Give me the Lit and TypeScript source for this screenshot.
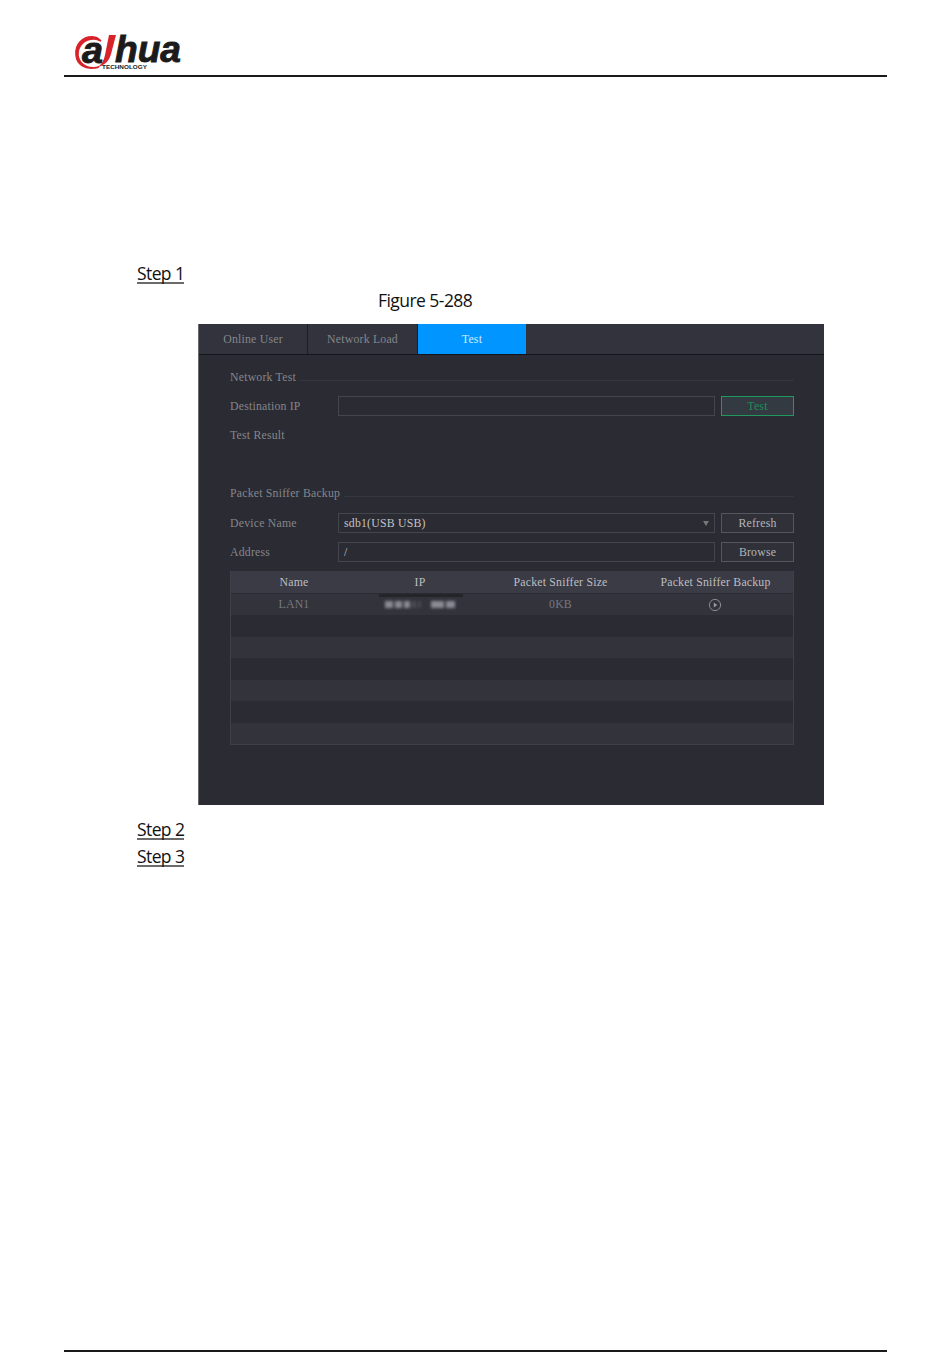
import { LitElement, html, css } from "lit";
import { customElement } from "lit/decorators.js";

@customElement("app-root")
export class AppRoot extends LitElement {
  static styles = css`
    :host { display: block; width: 950px; height: 1369px; background: #fff; overflow: hidden; }
    .page { height: 1369px; box-sizing: border-box; padding: 0 63px 0 64px; display: flex; flex-direction: column; position: relative; }
    .head { height: 75px; border-bottom: 2px solid #1a1a1a; flex: none; display: flex; align-items: flex-end; }
    .logo { display: block; margin-left: 9px; margin-bottom: -1px; overflow: visible; }
    .logo .word { font: italic 700 36px "Liberation Sans", sans-serif; fill: #1b1b1b; stroke: #1b1b1b; stroke-width: 0.9px; }
    .logo .tech { font: 700 6.2px "Liberation Sans", sans-serif; fill: #222; }
    .body { flex: 1; padding: 0 0 0 73px; display: flex; flex-direction: column; }
    .step { font: 17.5px "Open Sans", sans-serif; color: #111; letter-spacing: -0.6px; width: 47px; border-bottom: 2px solid #6b6b6b; box-sizing: border-box; height: 20px; line-height: 18px; white-space: nowrap; }
    .s1 { margin-top: 187px; }
    .cap { font: 17.5px/24px "Open Sans", sans-serif; color: #111; letter-spacing: -0.55px; margin: 4px 0 0 241px; height: 24px; }
    .panel { width: 626px; height: 481px; margin: 12px 0 0 61px; background: #2a2b33; box-sizing: border-box; border-left: 1px solid #6a6a70; font: 11.8px "Liberation Serif", serif; letter-spacing: 0.2px; color: #85868b; display: flex; flex-direction: column; }
    .tabs { display: flex; height: 31px; flex: none; background: #32333c; border-bottom: 1px solid #14151a; box-sizing: border-box; }
    .tab { width: 110px; display: flex; align-items: center; justify-content: center; border-right: 1px solid #1d1e24; box-sizing: border-box; }
    .tab.first { width: 109px; }
    .tab.on { background: #0095ff; color: #d5ecff; width: 108px; border-right: none; }
    .content { padding: 12px 30px 0 31px; display: flex; flex-direction: column; }
    .sec { display: flex; height: 20px; align-items: center; }
    .sec span { white-space: nowrap; padding-right: 4px; }
    .sec i { flex: 1; height: 1px; background: #35363e; margin-top: 6px; }
    .row { display: grid; grid-template-columns: 102px 377px 73px; column-gap: 6px; height: 20px; align-items: center; }
    .row.t9 { margin-top: 9px; }
    .row.t10 { margin-top: 10px; }
    .f { height: 20px; box-sizing: border-box; border: 1px solid #44464e; padding-left: 5px; line-height: 18px; color: #c2c3c6; position: relative; }
    .b { height: 20px; box-sizing: border-box; border: 1px solid #55565e; background: #2f3038; display: flex; align-items: center; justify-content: center; color: #b4b5b9; }
    .b.green { border-color: #1f9a5c; background: #333a42; color: #1f8c58; }
    .arrow { position: absolute; right: 5px; top: 7px; width: 0; height: 0; border-left: 3.5px solid transparent; border-right: 3.5px solid transparent; border-top: 5px solid #777; }
    .gap1 { margin-top: 9px; height: 20px; display: flex; align-items: center; }
    .sec2 { margin-top: 38px; }
    .tbl { margin-top: 9px; height: 174px; box-sizing: border-box; border: 1px solid #3f4048; border-top: none; display: flex; flex-direction: column; }
    .tr { display: grid; grid-template-columns: 126px 126px 155px 155px; flex: 1; align-items: center; text-align: center; }
    .tr.h { flex: none; height: 23px; background: #3a3b44; color: #bdbec2; border-bottom: 1px solid #2a2b33; box-sizing: border-box; }
    .tr.a { background: #32333b; }
    .tr.lan { color: #77787e; }
    .ipc { position: relative; display: flex; justify-content: center; }
    .ip { display: flex; gap: 2px; height: 7px; filter: blur(1.5px); }
    .ip b { display: block; background: #8a8b93; }
    .ipc::before { content: ""; position: absolute; left: 22px; width: 84px; top: -7px; height: 3px; background: #24252b; filter: blur(.5px); }
    .play { display: block; margin: 0 auto; transform: translateX(-1px); }
    .s2 { margin-top: 15px; }
    .s3 { margin-top: 7px; }
    .foot { flex: none; height: 2px; background: #1a1a1a; margin-bottom: 17px; }
  `;

  render() {
    const blanks = ["", "a", "", "a", "", "a"];
    return html`
      <div class="page">
        <div class="head">
          <svg class="logo" width="112" height="44" viewBox="0 0 112 44">
            <path d="M21 5C9 4 2 13 3 23c1 10 9 14 18 13 2 0 4-1 5-1-8 2-19 0-21-11C4 13 12 7 21 7c3 0 5 1 7 2-2-2-4-4-7-4z" fill="#d8232a" stroke="#d8232a" stroke-width="1.6"/>
            <text class="word" x="9" y="31" textLength="21" lengthAdjust="spacingAndGlyphs">a</text>
            <path d="M36 3h7l-5 19c-2 7-6 11-13 13 4-3 6-7 7-12z" fill="#d8232a"/>
            <text class="word" x="42" y="30" textLength="66" lengthAdjust="spacingAndGlyphs">hua</text>
            <text class="tech" x="29" y="37" textLength="45" lengthAdjust="spacingAndGlyphs">TECHNOLOGY</text>
          </svg>
        </div>
        <div class="body">
          <div class="step s1">Step 1</div>
          <div class="cap">Figure 5-288</div>
          <div class="panel">
            <div class="tabs">
              <div class="tab first">Online User</div>
              <div class="tab">Network Load</div>
              <div class="tab on">Test</div>
            </div>
            <div class="content">
              <div class="sec"><span>Network Test</span><i></i></div>
              <div class="row t9"><span>Destination IP</span><div class="f"></div><div class="b green">Test</div></div>
              <div class="gap1">Test Result</div>
              <div class="sec sec2"><span>Packet Sniffer Backup</span><i></i></div>
              <div class="row t10"><span>Device Name</span><div class="f">sdb1(USB USB)<span class="arrow"></span></div><div class="b">Refresh</div></div>
              <div class="row t9"><span>Address</span><div class="f">/</div><div class="b">Browse</div></div>
              <div class="tbl">
                <div class="tr h"><span>Name</span><span>IP</span><span>Packet Sniffer Size</span><span>Packet Sniffer Backup</span></div>
                <div class="tr a lan">
                  <span>LAN1</span>
                  <div class="ipc"><div class="ip"><b style="width:8px"></b><b style="width:7px"></b><b style="width:6px"></b><b style="width:4px;opacity:.3"></b><b style="width:3px;opacity:.25;margin-right:8px"></b><b style="width:13px"></b><b style="width:9px"></b></div></div>
                  <span>0KB</span>
                  <svg class="play" width="14" height="14" viewBox="0 0 14 14"><circle cx="7" cy="7" r="5.6" fill="none" stroke="#8a8b90"/><path d="M5.8 4.6 9.2 7l-3.4 2.4z" fill="#9a9ba0"/></svg>
                </div>
                ${blanks.map((c) => html`<div class="tr ${c}"></div>`)}
              </div>
            </div>
          </div>
          <div class="step s2">Step 2</div>
          <div class="step s3">Step 3</div>
        </div>
        <div class="foot"></div>
      </div>
    `;
  }
}
